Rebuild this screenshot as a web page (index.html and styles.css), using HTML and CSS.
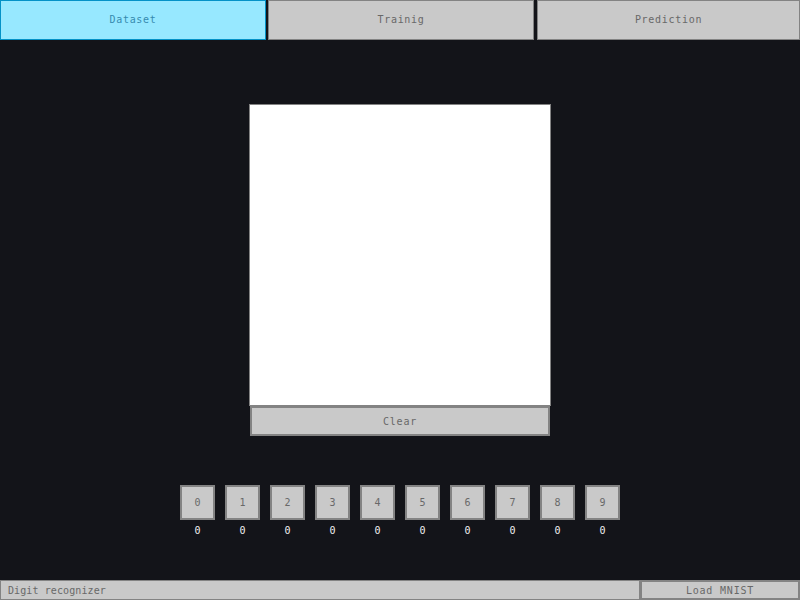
FILE: index.html
```html
<!DOCTYPE html>
<html>
<head>
<meta charset="utf-8">
<link rel="stylesheet" href="styles.css">
</head>
<body>
<div class="app">
  <div class="tabs">
    <div class="tab active">Dataset</div>
    <div class="tab">Trainig</div>
    <div class="tab last">Prediction</div>
  </div>
  <div class="main">
    <div class="canvas"></div>
    <div class="btn clear">Clear</div>
    <div class="digits">
      <div class="digit"><div class="btn dbtn">0</div><div class="count">0</div></div>
      <div class="digit"><div class="btn dbtn">1</div><div class="count">0</div></div>
      <div class="digit"><div class="btn dbtn">2</div><div class="count">0</div></div>
      <div class="digit"><div class="btn dbtn">3</div><div class="count">0</div></div>
      <div class="digit"><div class="btn dbtn">4</div><div class="count">0</div></div>
      <div class="digit"><div class="btn dbtn">5</div><div class="count">0</div></div>
      <div class="digit"><div class="btn dbtn">6</div><div class="count">0</div></div>
      <div class="digit"><div class="btn dbtn">7</div><div class="count">0</div></div>
      <div class="digit"><div class="btn dbtn">8</div><div class="count">0</div></div>
      <div class="digit"><div class="btn dbtn">9</div><div class="count">0</div></div>
    </div>
  </div>
  <div class="statusbar">
    <div class="status">Digit recognizer</div>
    <div class="btn load">Load MNIST</div>
  </div>
</div>
</body>
</html>
```
FILE: styles.css
```css
html, body {
  margin: 0;
  padding: 0;
  background: #131419;
}
body {
  font-family: "DejaVu Sans Mono", "Liberation Mono", monospace;
  font-size: 10px;
  color: #686868;
}
.app {
  width: 800px;
  height: 600px;
  display: flex;
  flex-direction: column;
}
.tabs {
  display: flex;
  height: 40px;
  gap: 2px;
}
.tab {
  box-sizing: border-box;
  width: 266px;
  height: 40px;
  padding-bottom: 1px;
  background: #c9c9c9;
  border: 1px solid #838383;
  display: flex;
  align-items: center;
  justify-content: center;
  letter-spacing: 0.7px;
  color: #686868;
}
.tab.last {
  width: auto;
  flex: 1;
  margin-left: 1px;
}
.tab.active {
  background: #97e8ff;
  border-color: #0492c7;
  color: #368baf;
}
.main {
  display: flex;
  flex-direction: column;
  align-items: center;
  padding-top: 64px;
}
.canvas {
  width: 300px;
  height: 300px;
  background: #ffffff;
  border: 1px solid #838383;
}
.btn {
  box-sizing: border-box;
  background: #c9c9c9;
  border: 2px solid #838383;
  color: #686868;
  display: flex;
  align-items: center;
  justify-content: center;
}
.clear {
  width: 300px;
  height: 30px;
  letter-spacing: 0.8px;
}
.digits {
  display: flex;
  gap: 10px;
  margin-top: 49px;
}
.digit {
  display: flex;
  flex-direction: column;
  align-items: center;
}
.dbtn {
  width: 35px;
  height: 35px;
}
.count {
  margin-top: 5px;
  color: #f0f0f0;
  line-height: 12px;
}
.statusbar {
  margin-top: auto;
  display: flex;
  height: 20px;
}
.status {
  box-sizing: border-box;
  width: 640px;
  height: 20px;
  background: #c9c9c9;
  border: 1px solid #838383;
  padding-left: 7px;
  display: flex;
  align-items: center;
  letter-spacing: 0.1px;
}
.load {
  width: 160px;
  height: 20px;
  letter-spacing: 0.8px;
}
```
